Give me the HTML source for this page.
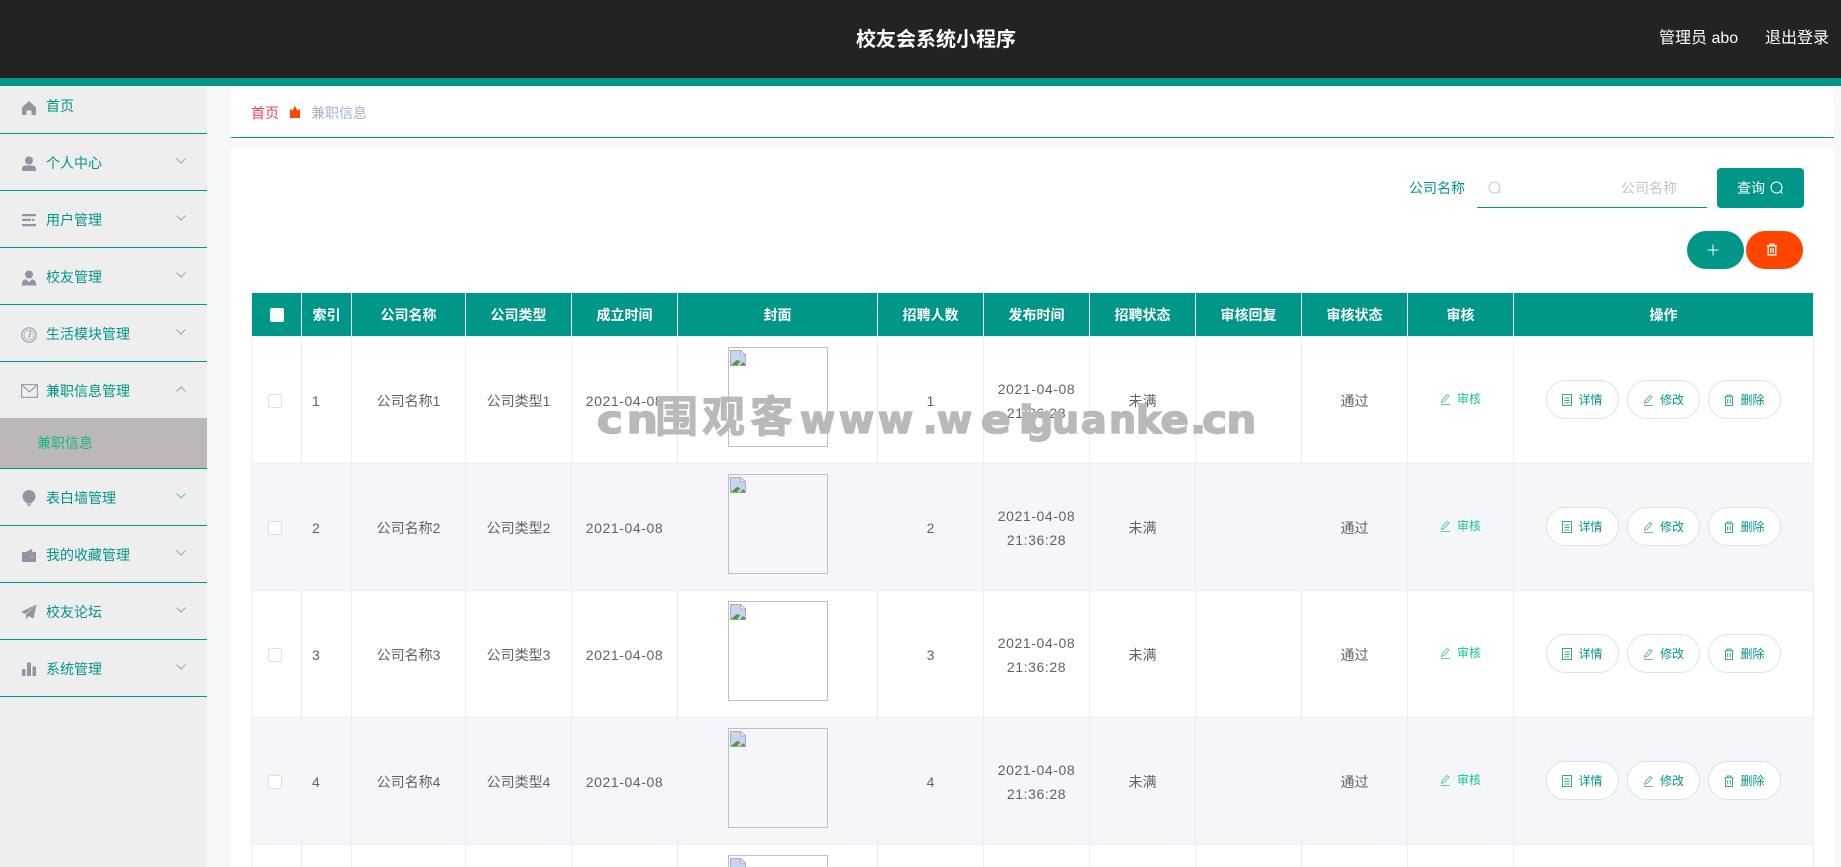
<!DOCTYPE html>
<html lang="zh"><head><meta charset="utf-8"><title>校友会系统小程序</title>
<style>
*{box-sizing:border-box;margin:0;padding:0}
html,body{width:1841px;height:867px;overflow:hidden;background:#f7f8fa;font-family:"Liberation Sans","Noto Sans CJK SC",sans-serif;font-size:14px;color:#606266}
#w{position:absolute;left:0;top:0;width:1841px;height:867px;overflow:hidden;background:#f7f8fa}
.a{position:absolute}
.top{left:0;top:0;width:1841px;height:86px;background:#232323;border-bottom:8px solid #009688;color:#fff}
.side{left:0;top:86px;width:207px;height:781px;background:#eee}
.l{position:absolute;left:0;width:207px;height:1px;background:#009688}
.n{position:absolute;left:46px;height:20px;line-height:20px;color:#009688;white-space:nowrap}
.i{position:absolute;left:21px;width:16px;height:16px}
.c{position:absolute;left:176px;width:10px;height:6px}
table{position:absolute;left:251px;top:292px;width:1563px;table-layout:fixed;border-collapse:separate;border-spacing:0}
th{height:45px;background:#009688;color:#fff;font-size:14px;font-weight:700;text-align:center;border-top:1px solid #ebeef5;border-right:1px solid #ebeef5;border-bottom:1px solid #ebeef5}
td{height:127px;padding-top:1px;text-align:center;vertical-align:middle;border-right:1px solid #ebeef5;border-bottom:1px solid #ebeef5;line-height:24px;background:#fff}
tr:nth-child(even) td{background:#f5f6fa}
th:first-child,td:first-child{border-left:1px solid #ebeef5}
.idx{text-align:left;padding-left:10px}
.ck{display:block;width:14px;height:14px;border:1px solid #dcdfe6;background:#fff;border-radius:2px;margin-left:16px}
.ckh{display:block;width:14px;height:14px;background:#fff;border-radius:2px;margin-left:18px}
td.cv{vertical-align:top;padding-top:10px}
.d{letter-spacing:.6px}
.img{width:100px;height:100px;border:1px solid #c0c0c0;margin:0 auto;position:relative;text-align:left;overflow:hidden}
.img svg{position:absolute;left:1px;top:2px}
.sh{display:inline-flex;align-items:center;color:#19c39a;font-size:12px;position:relative;top:-1px}
.sh svg{margin-right:6px}
.ops{display:flex;justify-content:flex-start;padding-left:32px;gap:8px;position:relative;top:-1px}
.b{width:73px;height:39px;border:1px solid #e0e0ea;border-radius:20px;background:#fff;color:#009688;font-size:12px;display:flex;align-items:center;justify-content:center}
.b svg{margin-right:6px}
tr.last td{height:22px;border-bottom:0;line-height:0;font-size:0;padding:0}
tr.last td.cv{padding-top:10px}
tr.last .img{height:12px;border-bottom:0}
</style></head><body><div id="w">
<div class="a top">
<div class="a" style="left:856px;top:25px;width:160px;text-align:center;font-size:20px;line-height:30px;font-weight:700;white-space:nowrap">校友会系统小程序</div>
<div class="a" style="left:1659px;top:27px;font-size:16px;line-height:24px;white-space:nowrap">管理员 abo</div>
<div class="a" style="left:1765px;top:27px;font-size:16px;line-height:24px;white-space:nowrap">退出登录</div>
</div>

<div class="a side"></div>
<div class="a" style="left:0;top:0;width:207px;height:867px">
<div class="l" style="top:133px"></div><div class="l" style="top:190px"></div><div class="l" style="top:247px"></div><div class="l" style="top:304px"></div><div class="l" style="top:361px"></div>
<div class="a" style="left:0;top:418px;width:207px;height:50px;background:#bdb8b8"></div>
<div class="l" style="top:468px"></div><div class="l" style="top:525px"></div><div class="l" style="top:582px"></div><div class="l" style="top:639px"></div><div class="l" style="top:696px"></div>

<svg class="i" style="top:100px" viewBox="0 0 16 16" fill="#8f95a3"><path d="M8 1L1 7.500V15h4.500v-4.500h5V15H15V7.500z"/></svg>
<svg class="i" style="top:156px" viewBox="0 0 16 16" fill="#8f95a3"><circle cx="8" cy="4.500" r="4"/><path d="M1 15v-2.500C1 10.500 3 9.500 5 9.500h6c2 0 4 1 4 3V15z"/></svg>
<svg class="i" style="top:212px" viewBox="0 0 16 16" fill="#8f95a3"><path d="M1 2h14v2.200H1zM1 6.800h9v2.200H1zM11 6.500l3.500 1.400L11 9.500zM1 12h14v2.200H1z"/></svg>
<svg class="i" style="top:270px" viewBox="0 0 16 16" fill="#8f95a3"><circle cx="8" cy="4.500" r="4"/><path d="M0.500 15.500l1-4c.4-1.500 2-2 3.500-2.300L8 12l3-2.800c1.500.3 3.100.8 3.500 2.300l1 4z"/></svg>
<svg class="i" style="top:327px" viewBox="0 0 16 16" fill="none" stroke="#9a9fab" stroke-width="1.200"><circle cx="8" cy="8" r="7.200"/><circle cx="8" cy="8" r="5" stroke-width=".7"/><path d="M9.500 4L8 11" stroke-width="1.300"/></svg>
<svg class="i" style="top:383px;width:17px" viewBox="0 0 17 16" fill="none" stroke="#9a9fab" stroke-width="1.200"><rect x=".6" y="1.600" width="15.800" height="12.800"/><path d="M1 2l7.500 7L16 2"/></svg>
<svg class="i" style="top:490px" viewBox="0 0 16 16" fill="#8f95a3"><path d="M8 0a6.500 6.500 0 0 0-3.500 12c.7.400 1 1 1 1.500h5c0-.5.300-1.100 1-1.500A6.500 6.500 0 0 0 8 0zM6 14.300h4L9 16H7z"/></svg>
<svg class="i" style="top:547px" viewBox="0 0 16 16" fill="#8f95a3"><path d="M1 5h14v10H1zM5 5l5.500-3 1.200 3zM10.500 8.500H15v3h-4.500a1.500 1.500 0 0 1 0-3z"/><circle cx="11" cy="10" r=".8" fill="#eee"/></svg>
<svg class="i" style="top:604px" viewBox="0 0 16 16" fill="#8f95a3"><path d="M15.500.5L0 8l4.300 2zM15.500.5L5 10.500v5l2.500-3.500 5 2.500z"/></svg>
<svg class="i" style="top:661px" viewBox="0 0 16 16" fill="#8f95a3"><path d="M1 8h3.500v7H1zM6 1.500h4V15H6zM11.500 5.500H15V15h-3.500z"/></svg>

<div class="n" style="top:96px">首页</div>
<div class="n" style="top:153px">个人中心</div>
<div class="n" style="top:210px">用户管理</div>
<div class="n" style="top:267px">校友管理</div>
<div class="n" style="top:324px">生活模块管理</div>
<div class="n" style="top:381px">兼职信息管理</div>
<div class="n" style="left:37px;top:433px;color:#15b97c">兼职信息</div>
<div class="n" style="top:488px">表白墙管理</div>
<div class="n" style="top:545px">我的收藏管理</div>
<div class="n" style="top:602px">校友论坛</div>
<div class="n" style="top:659px">系统管理</div>

<svg class="c" style="top:158px" viewBox="0 0 10 6" fill="none" stroke="#7fb5ae"><path d="M.5.500L5 5 9.500.500"/></svg>
<svg class="c" style="top:215px" viewBox="0 0 10 6" fill="none" stroke="#7fb5ae"><path d="M.5.500L5 5 9.500.500"/></svg>
<svg class="c" style="top:272px" viewBox="0 0 10 6" fill="none" stroke="#7fb5ae"><path d="M.5.500L5 5 9.500.500"/></svg>
<svg class="c" style="top:329px" viewBox="0 0 10 6" fill="none" stroke="#7fb5ae"><path d="M.5.500L5 5 9.500.500"/></svg>
<svg class="c" style="top:386px" viewBox="0 0 10 6" fill="none" stroke="#7fb5ae"><path d="M.5 5.500L5 1l4.500 4.500"/></svg>
<svg class="c" style="top:493px" viewBox="0 0 10 6" fill="none" stroke="#7fb5ae"><path d="M.5.500L5 5 9.500.500"/></svg>
<svg class="c" style="top:550px" viewBox="0 0 10 6" fill="none" stroke="#7fb5ae"><path d="M.5.500L5 5 9.500.500"/></svg>
<svg class="c" style="top:607px" viewBox="0 0 10 6" fill="none" stroke="#7fb5ae"><path d="M.5.500L5 5 9.500.500"/></svg>
<svg class="c" style="top:664px" viewBox="0 0 10 6" fill="none" stroke="#7fb5ae"><path d="M.5.500L5 5 9.500.500"/></svg>
</div>

<div class="a" style="left:231px;top:86px;width:1603px;height:52px;background:#fff;border-bottom:1px solid #009688"></div>
<div class="a" style="left:251px;top:103px;line-height:20px;color:#f9415a">首页</div>
<svg class="a" style="left:290px;top:106px;width:10px;height:12px" viewBox="0 0 10 12" fill="#ff4500"><path d="M0 3l2.500 1.500L5 0l2.500 4.500L10 3v9H0z"/></svg>
<div class="a" style="left:311px;top:103px;line-height:20px;color:#a6b1cb">兼职信息</div>

<div class="a" style="left:231px;top:148px;width:1603px;height:719px;background:#fff"></div>
<div class="a" style="left:1409px;top:178px;line-height:20px;color:#009688">公司名称</div>
<div class="a" style="left:1477px;top:168px;width:230px;height:40px;border-bottom:1px solid #009688"></div>
<svg class="a" style="left:1488px;top:181px;width:14px;height:14px" viewBox="0 0 14 14" fill="none" stroke="#c9ccd4" stroke-width="1.100"><circle cx="6.500" cy="6.500" r="5.500"/><path d="M10.500 10.500l2 2"/></svg>
<div class="a" style="left:1621px;top:178px;line-height:20px;color:#c0c4cc">公司名称</div>
<div class="a" style="left:1717px;top:168px;width:87px;height:40px;background:#009688;border-radius:4px;color:#fff;line-height:40px;padding-left:20px">查询</div>
<svg class="a" style="left:1770px;top:181px;width:14px;height:14px" viewBox="0 0 14 14" fill="none" stroke="#fff" stroke-width="1.100"><circle cx="6.500" cy="6.500" r="5.500"/><path d="M10.500 10.500l2 2"/></svg>
<div class="a" style="left:1687px;top:231px;width:57px;height:38px;background:#009688;border-radius:19px"></div>
<svg class="a" style="left:1707px;top:244px;width:12px;height:12px" viewBox="0 0 12 12" stroke="#fff" stroke-width="1"><path d="M6 .5v11M.5 6h11"/></svg>
<div class="a" style="left:1746px;top:231px;width:57px;height:38px;background:#ff4500;border-radius:19px"></div>
<svg class="a" style="left:1766px;top:243px;width:12px;height:13px" viewBox="0 0 12 13" fill="none" stroke="#fff" stroke-width="1.300"><path d="M1 2.800h10M4 2.500V1h4v1.500M2.200 3v9h7.600V3M4.800 5v5M7.200 5v5"/></svg>

<table>
<colgroup><col style="width:51px"><col style="width:50px"><col style="width:114px"><col style="width:106px"><col style="width:106px"><col style="width:200px"><col style="width:106px"><col style="width:106px"><col style="width:106px"><col style="width:106px"><col style="width:106px"><col style="width:106px"><col style="width:300px"></colgroup>
<thead><tr><th><span class="ckh"></span></th><th>索引</th><th>公司名称</th><th>公司类型</th><th>成立时间</th><th>封面</th><th>招聘人数</th><th>发布时间</th><th>招聘状态</th><th>审核回复</th><th>审核状态</th><th>审核</th><th>操作</th></tr></thead>
<tbody>
<tr><td><span class="ck"></span></td><td class="idx">1</td><td>公司名称1</td><td>公司类型1</td><td class="d">2021-04-08</td><td class="cv"><div class="img"><svg width="16" height="16" viewBox="0 0 16 16"><path d="M.5.500h10l5 4.500v10.500H.5z" fill="#c6d5f6" stroke="#a9adb5"/><path d="M1 15l6-5 3.500 1L7 15.500z" fill="#4d9e2f"/><path d="M10 15.500l3-3.500 2 2v1.500z" fill="#7a7f77"/><path d="M10.500.500V5h5z" fill="#fff" stroke="#a9adb5"/></svg></div></td><td>1</td><td class="d">2021-04-08<br>21:36:28</td><td>未满</td><td></td><td>通过</td><td><span class="sh"><svg width="11" height="12" viewBox="0 0 11 12" fill="none" stroke="#5fc9ad"><path d="M1.500 9.500l.5-2.500L7 1.500l2 1.500-5 5.500zM1 11.500h9"/></svg>审核</span></td><td><div class="ops"><div class="b"><svg width="10" height="12" viewBox="0 0 10 12" fill="none" stroke="#3aa597"><path d="M.5.500h9v11h-9zM2.500 4h5M2.500 6.500h5M2.500 9h5"/></svg>详情</div><div class="b"><svg width="11" height="12" viewBox="0 0 11 12" fill="none" stroke="#7fa9a4"><path d="M1.500 9.500l.5-2.500L7 1.500l2 1.500-5 5.500zM1 11.500h9"/></svg>修改</div><div class="b"><svg width="10" height="12" viewBox="0 0 10 12" fill="none" stroke="#3aa597"><path d="M.5 2.800h9M3 2.500V1h4v1.500M1.500 3v8.500h7V3M3.700 5v4.500M6.300 5v4.500"/></svg>删除</div></div></td></tr>
<tr><td><span class="ck"></span></td><td class="idx">2</td><td>公司名称2</td><td>公司类型2</td><td class="d">2021-04-08</td><td class="cv"><div class="img"><svg width="16" height="16" viewBox="0 0 16 16"><path d="M.5.500h10l5 4.500v10.500H.5z" fill="#c6d5f6" stroke="#a9adb5"/><path d="M1 15l6-5 3.500 1L7 15.500z" fill="#4d9e2f"/><path d="M10 15.500l3-3.500 2 2v1.500z" fill="#7a7f77"/><path d="M10.500.500V5h5z" fill="#fff" stroke="#a9adb5"/></svg></div></td><td>2</td><td class="d">2021-04-08<br>21:36:28</td><td>未满</td><td></td><td>通过</td><td><span class="sh"><svg width="11" height="12" viewBox="0 0 11 12" fill="none" stroke="#5fc9ad"><path d="M1.500 9.500l.5-2.500L7 1.500l2 1.500-5 5.500zM1 11.500h9"/></svg>审核</span></td><td><div class="ops"><div class="b"><svg width="10" height="12" viewBox="0 0 10 12" fill="none" stroke="#3aa597"><path d="M.5.500h9v11h-9zM2.500 4h5M2.500 6.500h5M2.500 9h5"/></svg>详情</div><div class="b"><svg width="11" height="12" viewBox="0 0 11 12" fill="none" stroke="#7fa9a4"><path d="M1.500 9.500l.5-2.500L7 1.500l2 1.500-5 5.500zM1 11.500h9"/></svg>修改</div><div class="b"><svg width="10" height="12" viewBox="0 0 10 12" fill="none" stroke="#3aa597"><path d="M.5 2.800h9M3 2.500V1h4v1.500M1.500 3v8.500h7V3M3.700 5v4.500M6.300 5v4.500"/></svg>删除</div></div></td></tr>
<tr><td><span class="ck"></span></td><td class="idx">3</td><td>公司名称3</td><td>公司类型3</td><td class="d">2021-04-08</td><td class="cv"><div class="img"><svg width="16" height="16" viewBox="0 0 16 16"><path d="M.5.500h10l5 4.500v10.500H.5z" fill="#c6d5f6" stroke="#a9adb5"/><path d="M1 15l6-5 3.500 1L7 15.500z" fill="#4d9e2f"/><path d="M10 15.500l3-3.500 2 2v1.500z" fill="#7a7f77"/><path d="M10.500.500V5h5z" fill="#fff" stroke="#a9adb5"/></svg></div></td><td>3</td><td class="d">2021-04-08<br>21:36:28</td><td>未满</td><td></td><td>通过</td><td><span class="sh"><svg width="11" height="12" viewBox="0 0 11 12" fill="none" stroke="#5fc9ad"><path d="M1.500 9.500l.5-2.500L7 1.500l2 1.500-5 5.500zM1 11.500h9"/></svg>审核</span></td><td><div class="ops"><div class="b"><svg width="10" height="12" viewBox="0 0 10 12" fill="none" stroke="#3aa597"><path d="M.5.500h9v11h-9zM2.500 4h5M2.500 6.500h5M2.500 9h5"/></svg>详情</div><div class="b"><svg width="11" height="12" viewBox="0 0 11 12" fill="none" stroke="#7fa9a4"><path d="M1.500 9.500l.5-2.500L7 1.500l2 1.500-5 5.500zM1 11.500h9"/></svg>修改</div><div class="b"><svg width="10" height="12" viewBox="0 0 10 12" fill="none" stroke="#3aa597"><path d="M.5 2.800h9M3 2.500V1h4v1.500M1.500 3v8.500h7V3M3.700 5v4.500M6.300 5v4.500"/></svg>删除</div></div></td></tr>
<tr><td><span class="ck"></span></td><td class="idx">4</td><td>公司名称4</td><td>公司类型4</td><td class="d">2021-04-08</td><td class="cv"><div class="img"><svg width="16" height="16" viewBox="0 0 16 16"><path d="M.5.500h10l5 4.500v10.500H.5z" fill="#c6d5f6" stroke="#a9adb5"/><path d="M1 15l6-5 3.500 1L7 15.500z" fill="#4d9e2f"/><path d="M10 15.500l3-3.500 2 2v1.500z" fill="#7a7f77"/><path d="M10.500.500V5h5z" fill="#fff" stroke="#a9adb5"/></svg></div></td><td>4</td><td class="d">2021-04-08<br>21:36:28</td><td>未满</td><td></td><td>通过</td><td><span class="sh"><svg width="11" height="12" viewBox="0 0 11 12" fill="none" stroke="#5fc9ad"><path d="M1.500 9.500l.5-2.500L7 1.500l2 1.500-5 5.500zM1 11.500h9"/></svg>审核</span></td><td><div class="ops"><div class="b"><svg width="10" height="12" viewBox="0 0 10 12" fill="none" stroke="#3aa597"><path d="M.5.500h9v11h-9zM2.500 4h5M2.500 6.500h5M2.500 9h5"/></svg>详情</div><div class="b"><svg width="11" height="12" viewBox="0 0 11 12" fill="none" stroke="#7fa9a4"><path d="M1.500 9.500l.5-2.500L7 1.500l2 1.500-5 5.500zM1 11.500h9"/></svg>修改</div><div class="b"><svg width="10" height="12" viewBox="0 0 10 12" fill="none" stroke="#3aa597"><path d="M.5 2.800h9M3 2.500V1h4v1.500M1.500 3v8.500h7V3M3.700 5v4.500M6.300 5v4.500"/></svg>删除</div></div></td></tr>
<tr class="last"><td></td><td></td><td></td><td></td><td></td><td class="cv"><div class="img"><svg width="16" height="10" viewBox="0 0 16 10"><path d="M.5.500h10l5 4.500v5H.5z" fill="#c6d5f6" stroke="#a9adb5"/><path d="M10.500.500V5h5z" fill="#fff" stroke="#a9adb5"/></svg></div></td><td></td><td></td><td></td><td></td><td></td><td></td><td></td></tr>
</tbody></table>

<svg class="a" style="left:0;top:0;pointer-events:none" width="1841" height="867" font-family="DejaVu Sans, Noto Sans CJK SC, sans-serif" font-weight="700" fill="#b9b9b9" stroke="#b9b9b9" stroke-width="1.600">
<text y="433" font-size="38" transform="scale(1.15 1)" x="519 545">cn</text>
<text y="432" font-size="43" stroke-width="1" x="655 702 750">围观客</text>
<text y="433" font-size="38" x="800 839 878 923 937">www.w</text>
<text y="433" font-size="38" transform="scale(1.15 1)" x="853 886">ei</text>
<text y="433" font-size="38" x="1026 1052 1081 1109 1136">guank</text>
<text y="433" font-size="38" transform="scale(1.1 1)" x="1055 1082 1093 1115">e.cn</text>
</svg>
</div></body></html>
